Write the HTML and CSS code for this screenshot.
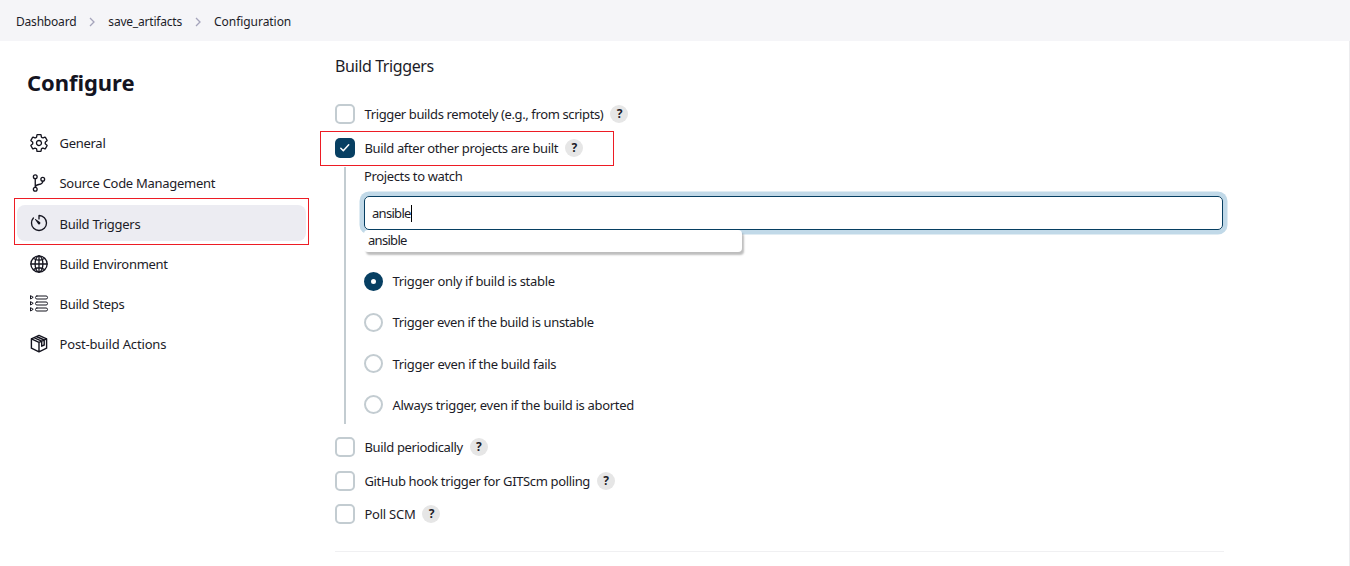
FILE: index.html
```html
<!DOCTYPE html>
<html lang="en">
<head>
<meta charset="utf-8">
<title>save_artifacts Config</title>
<link rel="stylesheet" href="styles.css">
</head>
<body>
<header class="breadcrumbs">
  <span class="crumb">Dashboard</span>
  <svg class="chevron" viewBox="0 0 6 10"><path d="M1 1l4 4-4 4"/></svg>
  <span class="crumb">save_artifacts</span>
  <svg class="chevron" viewBox="0 0 6 10"><path d="M1 1l4 4-4 4"/></svg>
  <span class="crumb crumb-current">Configuration</span>
</header>
<div class="page">
  <aside class="sidebar">
    <h1 class="title">Configure</h1>
    <nav class="tasks">
      <a class="task"><svg class="icon" viewBox="0 0 512 512"><path d="M262.29 192.31a64 64 0 1057.4 57.4 64.13 64.13 0 00-57.4-57.4zM416.39 256a154.34 154.34 0 01-1.53 20.79l45.21 35.46a10.81 10.81 0 012.45 13.75l-42.77 74a10.81 10.81 0 01-13.14 4.59l-44.9-18.08a16.11 16.11 0 00-15.17 1.75A164.48 164.48 0 01325 400.8a15.94 15.94 0 00-8.82 12.14l-6.73 47.89a11.08 11.08 0 01-10.68 9.17h-85.54a11.11 11.11 0 01-10.69-8.87l-6.72-47.82a16.07 16.07 0 00-9-12.22 155.3 155.3 0 01-21.46-12.57 16 16 0 00-15.11-1.71l-44.89 18.07a10.81 10.81 0 01-13.14-4.58l-42.77-74a10.8 10.8 0 012.45-13.75l38.21-30a16.05 16.05 0 006-14.08c-.36-4.17-.58-8.33-.58-12.5s.21-8.27.58-12.35a16 16 0 00-6.07-13.94l-38.19-30A10.81 10.81 0 0149.48 186l42.77-74a10.81 10.81 0 0113.14-4.59l44.9 18.08a16.11 16.11 0 0015.17-1.75A164.48 164.48 0 01187 111.2a15.94 15.94 0 008.82-12.14l6.73-47.89A11.08 11.08 0 01213.23 42h85.54a11.11 11.11 0 0110.69 8.87l6.72 47.82a16.07 16.07 0 009 12.22 155.3 155.3 0 0121.46 12.57 16 16 0 0015.11 1.71l44.89-18.07a10.81 10.81 0 0113.14 4.58l42.77 74a10.8 10.8 0 01-2.45 13.75l-38.21 30a16.05 16.05 0 00-6.05 14.08c.33 4.14.55 8.3.55 12.47z"/></svg><span>General</span></a>
      <a class="task"><svg class="icon" viewBox="0 0 512 512"><circle cx="160" cy="96" r="48"/><circle cx="160" cy="416" r="48"/><circle cx="352" cy="160" r="48"/><path d="M160 368V144M352 208c0 128-192 48-192 160"/></svg><span>Source Code Management</span></a>
      <a class="task task-active"><svg class="icon" viewBox="0 0 512 512"><path d="M112.91 128A191.85 191.85 0 0064 254c-1.18 106.35 85.65 193.8 192 194 106.2.2 192-85.83 192-192 0-104.54-83.55-189.61-187.5-192a4.36 4.36 0 00-4.5 4.37V152"/><path class="solid" d="M233.38 278.63l-79-113a8.13 8.13 0 0111.32-11.32l113 79a32.5 32.5 0 01-37.25 53.26 33.21 33.21 0 01-8.07-7.94z"/></svg><span>Build Triggers</span></a>
      <a class="task"><svg class="icon" viewBox="0 0 512 512"><circle cx="256" cy="256" r="208"/><ellipse cx="256" cy="256" rx="100" ry="208"/><path d="M256 48v416M48 256h416M117 117c38 27 87 43 139 43s101-16 139-43M117 395c38-27 87-43 139-43s101 16 139 43"/></svg><span>Build Environment</span></a>
      <a class="task"><svg class="icon icon-steps" viewBox="0 0 20 20"><rect x="6.5" y="2" width="12" height="3" rx="1.4"/><rect x="6.5" y="8" width="12" height="3" rx="1.4"/><rect x="6.5" y="14" width="12" height="3" rx="1.4"/><path d="M1.5 2v3l2.4-1.5zM1.5 8v3l2.4-1.5zM1.5 14v3l2.4-1.5z"/></svg><span>Build Steps</span></a>
      <a class="task"><svg class="icon icon-package" viewBox="0 0 20 20"><path d="M10 1.4l7.6 3.4v9.4L10 17.8l-7.6-3.6V4.8zM2.4 4.8L10 8.4l7.6-3.6M10 8.4v9.4M4.9 3.7l7.8 3.5v5l2.5-1.2V6L7.4 2.5"/></svg><span>Post-build Actions</span></a>
    </nav>
  </aside>
  <main class="content">
    <h2 class="section-title">Build Triggers</h2>
    <div class="option"><span class="checkbox"></span><span class="label label-long">Trigger builds remotely (e.g., from scripts)</span><span class="help">?</span></div>
    <div class="option"><span class="checkbox checked"><svg viewBox="0 0 20 20"><path d="M5.8 10.2l2.5 2.5 5.4-5.9"/></svg></span><span class="label">Build after other projects are built</span><span class="help">?</span></div>
    <section class="nested">
      <div class="field-label">Projects to watch</div>
      <div class="field">
        <div class="input"><span>ansible</span><i class="caret"></i></div>
        <div class="suggestions">ansible</div>
      </div>
      <div class="radios">
        <div class="radio-row"><span class="radio selected"></span><span>Trigger only if build is stable</span></div>
        <div class="radio-row"><span class="radio"></span><span class="label">Trigger even if the build is unstable</span></div>
        <div class="radio-row"><span class="radio"></span><span>Trigger even if the build fails</span></div>
        <div class="radio-row"><span class="radio"></span><span>Always trigger, even if the build is aborted</span></div>
      </div>
    </section>
    <div class="option"><span class="checkbox"></span><span class="label">Build periodically</span><span class="help">?</span></div>
    <div class="option"><span class="checkbox"></span><span class="label">GitHub hook trigger for GITScm polling</span><span class="help">?</span></div>
    <div class="option"><span class="checkbox"></span><span class="label label-short">Poll SCM</span><span class="help">?</span></div>
    <hr class="divider">
  </main>
</div>
<div class="highlight highlight-task"></div>
<div class="highlight highlight-option"></div>
</body>
</html>
```
FILE: styles.css
```css
* { box-sizing: border-box; }
body {
  margin: 0;
  height: 566px;
  overflow: hidden;
  position: relative;
  background: #fff;
  color: #1c1c28;
  font: 13px/20px "Noto Sans", "Open Sans", sans-serif;
  letter-spacing: -0.36px;
}
.breadcrumbs {
  height: 41px;
  display: flex;
  align-items: center;
  gap: 13px;
  padding: 2px 16px 0;
  background: #f5f5f8;
  font-size: 12px;
  letter-spacing: -0.2px;
}
.crumb-current { letter-spacing: -0.05px; }
.chevron { width: 6px; height: 10px; fill: none; stroke: #a5a4bb; stroke-width: 1.3; }
.page { display: flex; height: 525px; border-right: 1px solid #ececee; }
.sidebar { width: 335px; padding: 23px 29px 0 17px; }
.title { margin: 0 0 25px 10px; font-size: 22px; line-height: 36px; font-weight: 700; letter-spacing: -0.05px; color: #14141f; }
.tasks { display: flex; flex-direction: column; gap: 4.2px; letter-spacing: -0.28px; }
.task { display: flex; align-items: center; gap: 10.5px; height: 36px; padding-left: 12px; border-radius: 8px; }
.task span { padding-top: 0.3px; }
.task-active { background: #ececf2; }
.task-active span { padding-top: 1px; }
.task:last-child { letter-spacing: -0.16px; }
.icon { width: 20px; height: 20px; fill: none; stroke: #14141f; stroke-width: 34; stroke-linecap: round; stroke-linejoin: round; }
.icon .solid { fill: #14141f; stroke: none; }
.icon-steps { stroke-width: 1; }
.icon-package { stroke-width: 1.4; }
.content { width: 889px; padding-top: 13px; }
.section-title { margin: 0 0 26px; font-size: 16px; line-height: 24px; font-weight: 400; letter-spacing: -0.4px; }
.option { display: flex; align-items: center; height: 20px; margin-bottom: 13.5px; }
.label { letter-spacing: -0.36px; }
.label-long { letter-spacing: -0.38px; }
.label-short { letter-spacing: -0.25px; }
.checkbox { width: 20px; height: 20px; margin-right: 9.5px; border: 2px solid #c3ccd1; border-radius: 5px; }
.checked { border: 0; background: #073f62; }
.checked svg { display: block; fill: none; stroke: #fff; stroke-width: 1.5; stroke-linecap: round; stroke-linejoin: round; }
.help { width: 18px; height: 18px; margin-left: 7px; border-radius: 50%; background: #e6e6e6; font-size: 12px; line-height: 18px; font-weight: 700; text-align: center; }
.nested { height: 256.5px; margin: -4px 0 13.5px 9px; padding-left: 18px; border-left: 2px solid #c3ccd1; }
.field-label { line-height: 18px; margin-bottom: 11px; }
.field { position: relative; letter-spacing: -0.7px; }
.input { height: 34px; width: 859px; display: flex; align-items: center; padding-left: 7px; border: 1px solid #073f62; border-radius: 5px; box-shadow: 0 0 0 4.5px #c1d9e8; }
.caret { width: 1px; height: 17px; background: #000; }
.suggestions { position: absolute; left: 0; top: 34px; width: 378px; height: 22px; padding-left: 4px; line-height: 20px; background: #fff; border-radius: 4px; box-shadow: 2px 3px 2px rgba(0, 0, 0, .26); }
.radios { margin-top: 41px; display: flex; flex-direction: column; gap: 21.3px; letter-spacing: -0.31px; }
.radio-row { display: flex; align-items: center; gap: 9.5px; height: 20px; }
.radio { width: 19px; height: 19px; border: 2px solid #c3ccd1; border-radius: 50%; }
.selected { border: 7px solid #073f62; }
.divider { height: 1px; margin: 27px 0 0; border: 0; background: #f0f0f2; }
.highlight { position: absolute; border: 1px solid #ed1c24; }
.highlight-task { left: 14px; top: 198px; width: 295px; height: 47px; }
.highlight-option { left: 320px; top: 131px; width: 294px; height: 35px; }
```
